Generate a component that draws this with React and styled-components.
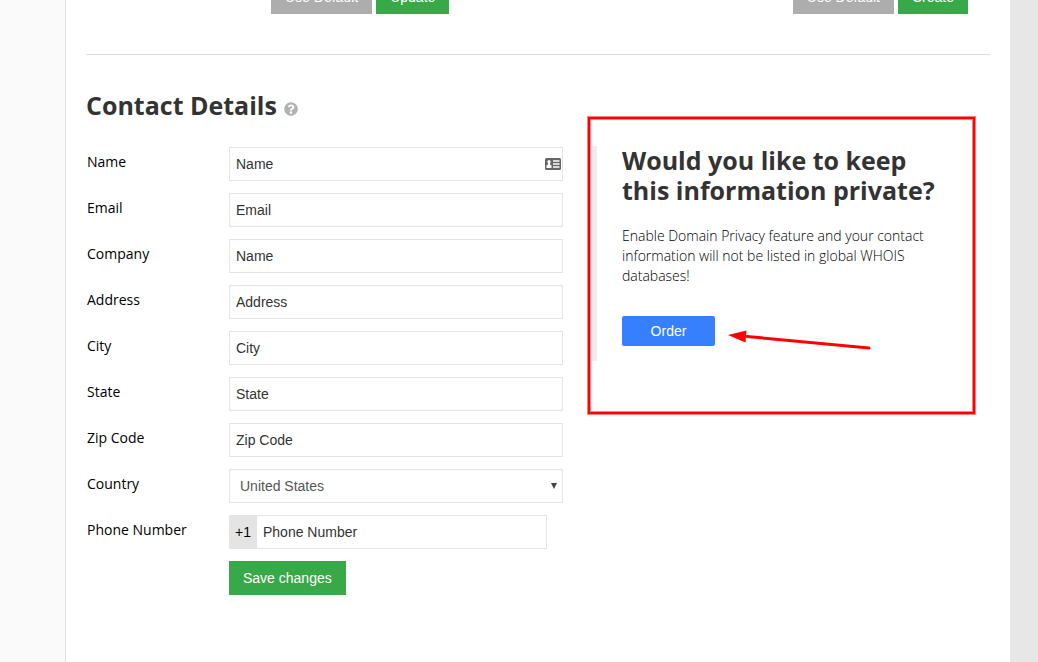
import React from 'react';
import styled, { createGlobalStyle } from 'styled-components';
import { FaQuestionCircle } from 'react-icons/fa';

const GlobalStyle = createGlobalStyle`
  *, *::before, *::after { box-sizing: border-box; }
  body {
    margin: 0;
    background: #e7e7e7;
    color: #000;
    font: 14px/20px "Open Sans", sans-serif;
  }
  button, input, select { font: 14px/20px "Liberation Sans", Arial, sans-serif; }
`;

const Page = styled.div`
  display: flex;
  min-height: 100vh;
  padding-right: 28px;
`;

const Gutter = styled.aside`
  flex: 0 0 66px;
  background: #fafafa;
  border-right: 1px solid #e0e0e0;
`;

const Main = styled.main`
  flex: 1;
  min-width: 0;
  padding: 0 20px 60px;
  background: #fff;
`;

const ActionStrip = styled.div`
  display: flex;
  justify-content: space-between;
  align-items: flex-end;
  height: 14px;
  padding: 0 22px 0 185px;
  overflow: hidden;
`;

const ButtonGroup = styled.div`
  display: flex;
  gap: 4px;
`;

const Button = styled.button`
  height: 34px;
  padding: 0 14px;
  border: 0;
  background: ${({ $muted }) => ($muted ? '#adadad' : '#37a948')};
  color: #fff;
  cursor: pointer;
`;

const Divider = styled.hr`
  margin: 40px 0 35px;
  border: 0;
  border-top: 1px solid #ddd;
`;

const Heading = styled.h2`
  display: flex;
  align-items: center;
  gap: 7px;
  margin: 0;
  color: #333;
  font-size: 25px;
  font-weight: 700;
  line-height: 30px;
`;

const HelpButton = styled.button`
  display: flex;
  padding: 7px 0 0;
  border: 0;
  background: none;
  color: #b3b3b3;
  font-size: 14px;
`;

const Columns = styled.div`
  display: grid;
  grid-template-columns: minmax(0, 477fr) minmax(0, 398fr);
  gap: 29px;
  align-items: start;
  margin-top: 26px;
`;

const Form = styled.form`
  display: grid;
  gap: 12px;
  padding-top: 1px;
`;

const Row = styled.div`
  display: grid;
  grid-template-columns: 143px minmax(0, 1fr);
`;

const Label = styled.label`
  padding: 5px 0 0 1px;
`;

const Control = styled.div`
  display: flex;
  align-items: center;
  height: 34px;
  margin-right: ${({ $inset }) => ($inset ? '16px' : '0')};
  padding-right: ${({ $adorned }) => ($adorned ? '1px' : '0')};
  border: 1px solid #e4e4e4;
  background: #fff;
`;

const TextInput = styled.input`
  flex: 1;
  min-width: 0;
  height: 32px;
  padding: 0 6px;
  border: 0;
  outline: 0;
  background: transparent;
  color: #333;
`;

const Select = styled.select`
  flex: 1;
  min-width: 0;
  height: 32px;
  padding: 0 10px;
  border: 0;
  outline: 0;
  appearance: none;
  background: transparent;
  color: #555;
`;

const SelectArrow = styled.svg`
  flex: none;
  margin-right: 5px;
  pointer-events: none;
`;

const Prefix = styled.span`
  align-self: stretch;
  width: 27px;
  padding-left: 5px;
  background: #e4e4e4;
  font: 14px/32px "Liberation Sans", Arial, sans-serif;
`;

const Submit = styled.div`
  padding-left: 143px;
`;

const Promo = styled.section`
  position: relative;
  padding: 0 34px 15px 25px;
  border-left: 5px solid #eee;
`;

const PromoHeading = styled(Heading)`
  margin: -1px 0 21px;
`;

const PromoText = styled.p`
  margin: 0 0 30px;
  font-weight: 300;
`;

const OrderButton = styled.button`
  display: block;
  width: 93px;
  height: 30px;
  padding: 0;
  border: 0;
  border-radius: 2px;
  background: #3680ff;
  color: #fff;
`;

const Highlight = styled.div`
  position: absolute;
  inset: -29px 15px -53px -9px;
  border: 2px solid #f00;
  box-shadow: 0 0 0 1px rgba(255, 0, 0, 0.5), inset 0 0 0 1px rgba(255, 0, 0, 0.5);
  pointer-events: none;
`;

const Arrow = styled.svg`
  position: absolute;
  left: 130px;
  top: 180px;
  pointer-events: none;
`;

const ContactCardIcon = () => (
  <svg width="16" height="12" viewBox="0 0 16 12" aria-hidden="true">
    <rect width="16" height="12" rx="1.5" fill="#666" />
    <path d="M4 2a1.6 1.6 0 0 1 1.6 1.6c0 .9-.3 1.5-.6 2v1l1.5.9V10h-5V7.5L3 6.600v-1c-.3-.5-.6-1.100-.6-2A1.600 1.600 0 0 1 4 2Z" fill="#fff" />
    <path d="M8 3h6.500M8 6h6.500M8 9h6.500" stroke="#fff" strokeWidth="1.300" />
  </svg>
);

const fields = [
  { id: 'name', label: 'Name', value: 'Name', card: true },
  { id: 'email', label: 'Email', value: 'Email' },
  { id: 'company', label: 'Company', value: 'Name' },
  { id: 'address', label: 'Address', value: 'Address' },
  { id: 'city', label: 'City', value: 'City' },
  { id: 'state', label: 'State', value: 'State' },
  { id: 'zip', label: 'Zip Code', value: 'Zip Code' },
];

export default function App() {
  return (
    <>
      <GlobalStyle />
      <Page>
        <Gutter />
        <Main>
          <ActionStrip>
            <ButtonGroup>
              <Button type="button" $muted>Use Default</Button>
              <Button type="button">Update</Button>
            </ButtonGroup>
            <ButtonGroup>
              <Button type="button" $muted>Use Default</Button>
              <Button type="button">Create</Button>
            </ButtonGroup>
          </ActionStrip>
          <Divider />
          <Heading>
            Contact Details
            <HelpButton type="button" aria-label="Help"><FaQuestionCircle /></HelpButton>
          </Heading>
          <Columns>
            <Form onSubmit={(e) => e.preventDefault()}>
              {fields.map(({ id, label, value, card }) => (
                <Row key={id}>
                  <Label htmlFor={id}>{label}</Label>
                  <Control $adorned={card}>
                    <TextInput id={id} type="text" defaultValue={value} />
                    {card && <ContactCardIcon />}
                  </Control>
                </Row>
              ))}
              <Row>
                <Label htmlFor="country">Country</Label>
                <Control>
                  <Select id="country" defaultValue="United States">
                    <option>United States</option>
                  </Select>
                  <SelectArrow width="6" height="6" viewBox="0 0 6 6" aria-hidden="true">
                    <path d="M0 0h6L3 6Z" fill="#444" />
                  </SelectArrow>
                </Control>
              </Row>
              <Row>
                <Label htmlFor="phone">Phone Number</Label>
                <Control $inset>
                  <Prefix>+1</Prefix>
                  <TextInput id="phone" type="text" defaultValue="Phone Number" />
                </Control>
              </Row>
              <Submit>
                <Button type="submit">Save changes</Button>
              </Submit>
            </Form>
            <Promo>
              <PromoHeading>Would you like to keep this information private?</PromoHeading>
              <PromoText>
                Enable Domain Privacy feature and your contact information will not be listed in
                global WHOIS databases!
              </PromoText>
              <OrderButton type="button">Order</OrderButton>
              <Highlight />
              <Arrow width="146" height="30" viewBox="0 0 146 30" aria-hidden="true">
                <path d="M20 10.500 142 22" stroke="#f00" strokeWidth="3" strokeLinecap="round" />
                <path d="M1 9 19.500 4.500 18.500 16.500Z" fill="#f00" />
              </Arrow>
            </Promo>
          </Columns>
        </Main>
      </Page>
    </>
  );
}
